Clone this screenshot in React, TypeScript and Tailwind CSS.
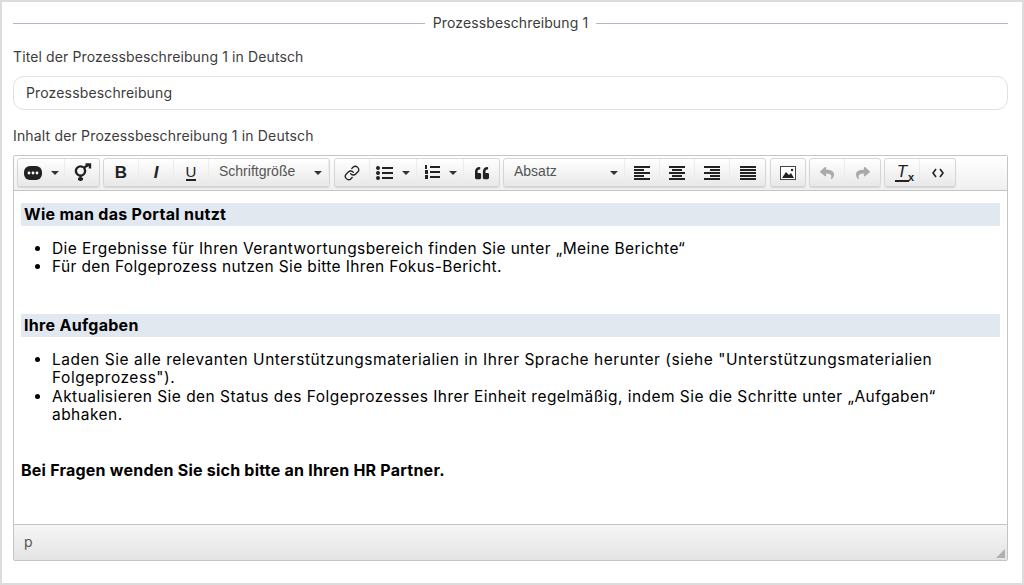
import type { ReactNode } from 'react';
import { Link as LinkIcon } from 'lucide-react';
import { FaQuoteLeft, FaReply, FaShare } from 'react-icons/fa';

function Caret() {
  return <span className="ml-[9px] inline-block h-0 w-0 border-x-[4px] border-t-[4px] border-x-transparent border-t-[#333]" />;
}

function Btn({ children, width = 'w-[35px]' }: { children: ReactNode; width?: string }) {
  return (
    <div className={`flex h-full items-center justify-center border-r border-[#ececec] last:border-r-0 ${width}`}>
      {children}
    </div>
  );
}

function Group({ children, className = '' }: { children: ReactNode; className?: string }) {
  return (
    <div className={`flex h-[29px] rounded-[3px] border border-[#d6d6d6] bg-gradient-to-b from-white to-[#e8e8e8] shadow-[0_1px_1px_rgba(0,0,0,0.12)] ${className}`}>
      {children}
    </div>
  );
}

function SelectBtn({ label, width }: { label: string; width: string }) {
  return (
    <div className={`flex h-full items-start justify-between border-r border-[#ececec] pl-[10px] pr-[6px] font-['Liberation_Sans',sans-serif] text-[14px] leading-[25px] text-[#555] ${width}`}>
      <span>{label}</span>
      <span className="mt-[12px] inline-block h-0 w-0 border-x-[4px] border-t-[4px] border-x-transparent border-t-[#333]" />
    </div>
  );
}

function AlignIcon({ rows }: { rows: [number, number][] }) {
  return (
    <svg width="16" height="14" viewBox="0 0 16 14" fill="#222">
      {rows.map(([x, w], i) => (
        <rect key={i} x={x} y={i * 3} width={w} height="2" />
      ))}
    </svg>
  );
}

function Heading({ children }: { children: ReactNode }) {
  return <div className="bg-[#e1e8f0] pl-[3px] text-[16px] font-bold leading-[23px] tracking-[0.3px] text-black">{children}</div>;
}

export default function App() {
  return (
    <div className="h-[585px] w-[1024px] overflow-hidden border-2 border-[#dcdcdc] bg-white pl-[11px] pr-[14px] pt-[13px] font-['Inter',sans-serif] text-[#3c3c3c]">
      <div className="flex items-center gap-2 text-[14px] leading-[16px] tracking-[0.12px]">
        <div className="h-px flex-1 bg-[#b6b4c8]" />
        <span>Prozessbeschreibung 1</span>
        <div className="h-px flex-1 bg-[#b6b4c8]" />
      </div>

      <label className="mt-[17px] block text-[14px] leading-[18px] tracking-[0.12px]">Titel der Prozessbeschreibung 1 in Deutsch</label>
      <div className="mt-[10px] flex h-[34px] items-center rounded-[11px] border border-[#e0e2ea] px-3 pb-[2px] text-[14px] tracking-[0.15px]">Prozessbeschreibung</div>

      <label className="mt-[17px] block text-[14px] leading-[18px] tracking-[0.17px]">Inhalt der Prozessbeschreibung 1 in Deutsch</label>

      <div className="mt-[10px] flex h-[406px] flex-col rounded-[2px] border border-[#c4c4c4]">
        <div className="flex h-[34px] shrink-0 gap-[3px] bg-gradient-to-b from-white to-[#f0f0f0] pl-[3px] pt-[2px]">
          <Group>
            <Btn width="w-[47px]">
              <svg width="18" height="14" viewBox="0 0 18 14">
                <rect width="18" height="14" rx="6" fill="#222" />
                <circle cx="5" cy="7" r="1.4" fill="#fff" />
                <circle cx="9" cy="7" r="1.4" fill="#fff" />
                <circle cx="13" cy="7" r="1.4" fill="#fff" />
              </svg>
              <Caret />
            </Btn>
            <Btn width="w-[34px]">
              <svg width="19" height="19" viewBox="0 0 19 19" fill="none" stroke="#222" strokeWidth="2.4">
                <circle cx="7.5" cy="8" r="4.6" />
                <path d="M7.5 13v5M5 16h5M11 4.5L15.5 2M12.5 1.5h4.5v4" />
              </svg>
            </Btn>
          </Group>
          <Group>
            <Btn><span className="font-['Liberation_Sans',sans-serif] text-[17px] font-bold text-[#222]">B</span></Btn>
            <Btn><span className="font-['Liberation_Sans',sans-serif] text-[17px] font-bold italic text-[#222]">I</span></Btn>
            <Btn><span className="border-b-2 border-[#222] font-['Liberation_Sans',sans-serif] text-[15px] leading-[15px] text-[#222]">U</span></Btn>
            <SelectBtn label="Schriftgröße" width="w-[120px]" />
          </Group>
          <Group className="ml-px">
            <Btn><LinkIcon size={16} strokeWidth={2} color="#222" /></Btn>
            <Btn width="w-[47px]">
              <svg width="17" height="14" viewBox="0 0 17 14" fill="#222">
                <circle cx="2" cy="2" r="2" /><circle cx="2" cy="7" r="2" /><circle cx="2" cy="12" r="2" />
                <rect x="6" y="1" width="11" height="2" /><rect x="6" y="6" width="11" height="2" /><rect x="6" y="11" width="11" height="2" />
              </svg>
              <Caret />
            </Btn>
            <Btn width="w-[47px]">
              <svg width="16" height="15" viewBox="0 0 16 15" fill="#222">
                <rect x="1" y="0" width="2" height="4" /><rect x="1" y="5" width="3" height="4" /><rect x="1" y="10" width="3" height="4" />
                <rect x="6" y="1" width="10" height="2" /><rect x="6" y="6" width="10" height="2" /><rect x="6" y="11" width="10" height="2" />
              </svg>
              <Caret />
            </Btn>
            <Btn><FaQuoteLeft size={14} color="#222" /></Btn>
          </Group>
          <Group>
            <SelectBtn label="Absatz" width="w-[121px]" />
            <Btn><AlignIcon rows={[[0, 16], [0, 10], [0, 16], [0, 10], [0, 16]]} /></Btn>
            <Btn><AlignIcon rows={[[0, 16], [3, 10], [0, 16], [3, 10], [0, 16]]} /></Btn>
            <Btn><AlignIcon rows={[[0, 16], [6, 10], [0, 16], [6, 10], [0, 16]]} /></Btn>
            <Btn><AlignIcon rows={[[0, 16], [0, 16], [0, 16], [0, 16], [0, 16]]} /></Btn>
          </Group>
          <Group className="ml-px">
            <Btn width="w-[34px]">
              <svg width="16" height="14" viewBox="0 0 16 14">
                <rect x="0.5" y="0.5" width="15" height="13" fill="#fff" stroke="#444" />
                <path d="M2 12l4-6 3 3 2-2 3 5z" fill="#222" />
                <circle cx="12" cy="4" r="1.2" fill="#222" />
              </svg>
            </Btn>
          </Group>
          <Group>
            <Btn><FaReply size={14} color="#aaa" /></Btn>
            <Btn><FaShare size={14} color="#aaa" /></Btn>
          </Group>
          <Group>
            <Btn>
              <span className="relative border-b-2 border-[#222] px-[2px] font-['Liberation_Sans',sans-serif] text-[17px] italic leading-[17px] text-[#222]">
                T<span className="absolute -right-[5px] bottom-[-3px] text-[11px] font-bold not-italic leading-none">x</span>
              </span>
            </Btn>
            <Btn>
              <svg width="12" height="10" viewBox="0 0 12 10" fill="none" stroke="#222" strokeWidth="1.6">
                <path d="M4 1L1 5l3 4M8 1l3 4-3 4" />
              </svg>
            </Btn>
          </Group>
        </div>

        <div className="flex-1 border-t border-[#c4c4c4] bg-white px-[7px] pt-[12px] text-[15.5px] leading-[18.4px] text-black">
          <Heading>Wie man das Portal nutzt</Heading>
          <ul className="mt-[14px] list-disc pl-[31px]">
            <li className="tracking-[0.42px]">Die Ergebnisse für Ihren Verantwortungsbereich finden Sie unter „Meine Berichte“</li>
            <li className="tracking-[0.36px]">Für den Folgeprozess nutzen Sie bitte Ihren Fokus-Bericht.</li>
          </ul>
          <div className="mt-[37px]"><Heading>Ihre Aufgaben</Heading></div>
          <ul className="mt-[14px] list-disc pl-[31px]">
            <li className="tracking-[0.53px]">Laden Sie alle relevanten Unterstützungsmaterialien in Ihrer Sprache herunter (siehe "Unterstützungsmaterialien Folgeprozess").</li>
            <li className="tracking-[0.46px]">Aktualisieren Sie den Status des Folgeprozesses Ihrer Einheit regelmäßig, indem Sie die Schritte unter „Aufgaben“<br />abhaken.</li>
          </ul>
          <p className="mt-[37px] text-[16px] font-bold tracking-[0.23px]">Bei Fragen wenden Sie sich bitte an Ihren HR Partner.</p>
        </div>

        <div className="relative h-[36px] shrink-0 border-t border-[#c4c4c4] bg-gradient-to-b from-[#f6f6f6] to-[#e4e4e4] pl-[10px] pt-[8px] text-[14px] leading-[18px] text-[#555]">
          p
          <svg className="absolute bottom-[2px] right-[2px]" width="9" height="9" viewBox="0 0 9 9">
            <path d="M9 0v9H0z" fill="#8c8c8c" opacity="0.6" />
          </svg>
        </div>
      </div>
    </div>
  );
}
